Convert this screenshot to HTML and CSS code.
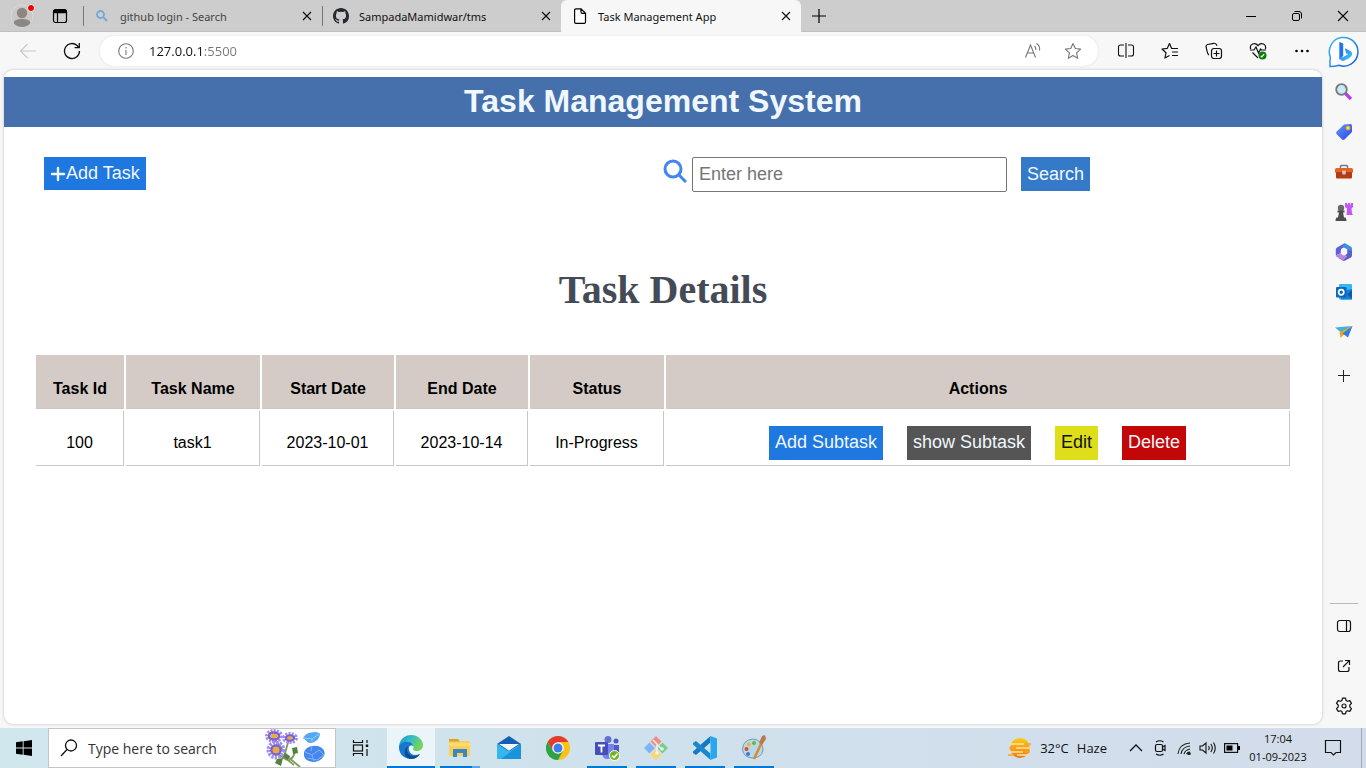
FILE: index.html
```html
<!DOCTYPE html>
<html lang="en">
<head>
<meta charset="utf-8">
<title>Task Management App</title>
<link rel="stylesheet" href="styles.css">
</head>
<body>
<header class="tabstrip">
  <button class="profile" aria-label="Profile">
    <svg width="26" height="26" viewBox="0 0 26 26"><circle cx="13" cy="13" r="11" fill="#cbc9c6" stroke="#dedad5"/><circle cx="13" cy="10" r="5.200" fill="#8b8784"/><path d="M4.500 20q.5-4 8.500-4t8.500 4q-3 4-8.500 4t-8.500-4z" fill="#8b8784"/><circle cx="22" cy="5" r="3.500" fill="#e60000" stroke="#eee"/></svg>
  </button>
  <button class="workspaces" aria-label="Tab actions">
    <svg width="16" height="16" viewBox="0 0 16 16" fill="none" stroke="#000" stroke-width="1.200"><rect x="1.500" y="1.500" width="13" height="13" rx="2"/><path d="M2 3.500h12" stroke-width="3.500"/><path d="M5.500 4v10"/></svg>
  </button>
  <nav class="tabs" aria-label="Tabs">
    <div class="tab">
      <svg width="16" height="16" viewBox="0 0 16 16" fill="none" stroke="#74a8d6" stroke-width="1.800"><circle cx="6.500" cy="6.500" r="3.500"/><path d="M9 9l4 4"/></svg>
      <a class="tab-title muted" href="#">github login - Search</a>
      <button class="close" aria-label="Close tab"><svg width="10" height="10" viewBox="0 0 10 10" stroke="#111" stroke-width="1.200"><path d="M1 1l8 8M9 1l-8 8"/></svg></button>
    </div>
    <div class="tab">
      <svg width="16" height="16" viewBox="0 0 16 16" fill="#24292f"><path d="M8 0C3.580 0 0 3.580 0 8c0 3.540 2.290 6.530 5.470 7.590.4.070.55-.17.55-.38v-1.490C3.730 14.200 3.300 12.640 3.300 12.640c-.36-.92-.89-1.170-.89-1.170-.73-.5.050-.49.050-.49.810.06 1.230.83 1.230.83.720 1.230 1.880.87 2.340.67.070-.52.280-.87.510-1.070-1.780-.2-3.640-.89-3.640-3.950 0-.87.310-1.590.82-2.150-.08-.2-.36-1.020.08-2.120 0 0 .67-.21 2.200.82a7.600 7.600 0 0 1 4 0c1.530-1.040 2.200-.82 2.200-.82.440 1.100.16 1.920.08 2.120.51.560.82 1.270.82 2.150 0 3.070-1.870 3.750-3.650 3.950.29.250.54.730.54 1.480v2.320c0 .21.150.46.550.38A8 8 0 0 0 16 8c0-4.420-3.580-8-8-8z"/></svg>
      <a class="tab-title" href="#">SampadaMamidwar/tms</a>
      <button class="close" aria-label="Close tab"><svg width="10" height="10" viewBox="0 0 10 10" stroke="#111" stroke-width="1.200"><path d="M1 1l8 8M9 1l-8 8"/></svg></button>
    </div>
    <div class="tab active">
      <svg width="16" height="16" viewBox="0 0 16 16" fill="#fff" stroke="#000" stroke-width="1.200"><path d="M4 .8h5l4.500 4.500V14q0 1.300-1.300 1.300H4Q2.600 15.300 2.600 14V2Q2.600.8 4 .8zM9 .8V4q0 1.300 1.300 1.300h3.200"/></svg>
      <a class="tab-title" href="#">Task Management App</a>
      <button class="close" aria-label="Close tab"><svg width="10" height="10" viewBox="0 0 10 10" stroke="#111" stroke-width="1.200"><path d="M1 1l8 8M9 1l-8 8"/></svg></button>
    </div>
  </nav>
  <button class="newtab" aria-label="New tab"><svg width="14" height="14" viewBox="0 0 14 14" stroke="#000" stroke-width="1.200"><path d="M7 0v14M0 7h14"/></svg></button>
  <div class="window-controls">
    <button aria-label="Minimise"><svg width="12" height="12" viewBox="0 0 12 12" stroke="#000"><path d="M1 6.500h10"/></svg></button>
    <button aria-label="Restore"><svg width="12" height="12" viewBox="0 0 12 12" fill="none" stroke="#000"><rect x="1.500" y="3.500" width="7" height="7" rx="1.500"/><path d="M3.500 1.500H8q2.500 0 2.500 2.500v4.500"/></svg></button>
    <button aria-label="Close"><svg width="12" height="12" viewBox="0 0 12 12" stroke="#000" stroke-width="1.100"><path d="M1 1l10 10M11 1L1 11"/></svg></button>
  </div>
</header>

<div class="browser">
  <div class="main-column">
    <div class="toolbar">
      <button class="tool back" aria-label="Back"><svg width="18" height="16" viewBox="0 0 18 16" fill="none" stroke="#c8c8c8" stroke-width="1.100"><path d="M17 8H2M8.500 1L1.500 8l7 7"/></svg></button>
      <button class="tool" aria-label="Refresh"><svg width="18" height="18" viewBox="0 0 18 18" fill="none" stroke="#111" stroke-width="1.300"><path d="M16.500 9A7.500 7.500 0 1 1 14.300 3.700L16 5.500M16.300 1v4.700h-4.700"/></svg></button>
      <div class="address">
        <svg width="16" height="16" viewBox="0 0 16 16" fill="none" stroke="#777" stroke-width="1.100"><circle cx="8" cy="8" r="7.300"/><path d="M8 7v5M8 4v1.500"/></svg>
        <input class="url" type="text" aria-label="Address" value="127.0.0.1:5500">
        <button class="inline-tool" aria-label="Read aloud"><svg width="18" height="18" viewBox="0 0 18 18" fill="none" stroke="#777" stroke-width="1.100"><path d="M1.500 15.500L6.500 3l5 12.500M3.300 11h6.400M10.500 4q1.500 1.500 1.300 4M12.500 1.500q4 2.500 3 7"/></svg></button>
        <button class="inline-tool" aria-label="Add to favourites"><svg width="18" height="18" viewBox="0 0 18 18" fill="none" stroke="#777" stroke-width="1.100" stroke-linejoin="round"><path d="M9 1.500l2.300 5 5.300.6-4 3.700 1.100 5.500L9 13.600l-4.700 2.700 1.100-5.500-4-3.700 5.300-.6z"/></svg></button>
      </div>
      <button class="tool" aria-label="Split screen"><svg width="18" height="18" viewBox="0 0 18 18" fill="none" stroke="#111" stroke-width="1.100"><path d="M7 3H3.500Q1.500 3 1.500 5v7q0 2 2 2H7M11 3h3.500q2 0 2 2v7q0 2-2 2H11M9 1v15"/></svg></button>
      <button class="tool" aria-label="Favourites"><svg width="18" height="18" viewBox="0 0 18 18" fill="none" stroke="#111" stroke-width="1.200" stroke-linejoin="round"><path d="M13 6.500H10.700L8.500 1.500 6.300 6.300 1 7l4 3.800-1.100 5.200L8.500 13.500M12 6.500h5M11 10h6M11 13.500h6"/></svg></button>
      <button class="tool" aria-label="Collections"><svg width="18" height="18" viewBox="0 0 18 18" fill="none" stroke="#111" stroke-width="1.200"><rect x="6.500" y="6.500" width="10" height="10" rx="2.500"/><path d="M11.500 8.500v6M8.500 11.500h6M4 13Q2.500 12 2 9L1 4.500Q1 3 2.500 2.500L9 1.300Q11 1 12 3.800"/></svg></button>
      <button class="tool" aria-label="Browser essentials"><svg width="18" height="18" viewBox="0 0 18 18" fill="none" stroke="#111" stroke-width="1.200"><path d="M1.700 7C0 2.500 6-.5 9 3.600 12-.5 18 2.500 16.300 7M1 8h4l2-3 2.500 6L11.500 7l1 1H17M3.500 10.500L9 16"/><circle cx="13.500" cy="13.500" r="4" fill="#107c10" stroke="none"/><path d="M11.800 13.800l1 1 2.400-2.600" stroke="#fff"/></svg></button>
      <button class="tool" aria-label="Settings and more"><svg width="16" height="16" viewBox="0 0 16 16"><g fill="#000"><circle cx="2.500" cy="8" r="1.300"/><circle cx="8" cy="8" r="1.300"/><circle cx="13.500" cy="8" r="1.300"/></g></svg></button>
    </div>

    <main class="page">
      <h1 class="banner">Task Management System</h1>
      <div class="actions-bar">
        <div class="add-cell">
          <button class="btn add-task"><svg width="16" height="16" viewBox="0 0 16 16" stroke="#f0f8ff" stroke-width="2.400" stroke-linecap="round"><path d="M8 2v12M2 8h12"/></svg>Add Task</button>
        </div>
        <form class="search-form">
          <label for="q" aria-label="Search tasks"><svg width="24" height="24" viewBox="0 0 24 24" fill="none" stroke="#4285f4" stroke-width="3"><circle cx="10" cy="10" r="8"/><path d="M16 16l7 7"/></svg></label>
          <input id="q" class="task-input" type="text" placeholder="Enter here">
          <button class="btn search-btn" type="button">Search</button>
        </form>
      </div>
      <h2 class="details-title">Task Details</h2>
      <table class="tasks">
        <colgroup><col class="col-id"><col class="col-wide"><col class="col-date"><col class="col-date"><col class="col-wide"><col></colgroup>
        <thead><tr><th>Task Id</th><th>Task Name</th><th>Start Date</th><th>End Date</th><th>Status</th><th>Actions</th></tr></thead>
        <tbody><tr>
          <td>100</td><td>task1</td><td>2023-10-01</td><td>2023-10-14</td><td>In-Progress</td>
          <td class="actions-cell"><div class="row-actions"><button class="btn add-sub">Add Subtask</button><button class="btn show-sub">show Subtask</button><button class="btn edit">Edit</button><button class="btn delete">Delete</button></div></td>
        </tr></tbody>
      </table>
    </main>
  </div>

  <aside class="sidebar">
    <button class="side bing" aria-label="Bing Chat"><svg width="32" height="32" viewBox="0 0 32 32"><defs><linearGradient id="ring" x1="0" y1="0" x2="1" y2="1"><stop stop-color="#35c0f0"/><stop offset="1" stop-color="#2258d8"/></linearGradient><linearGradient id="bee" x1="0" y1="0" x2="1" y2="1"><stop stop-color="#2a6ff0"/><stop offset="1" stop-color="#3fd0f2"/></linearGradient></defs><path d="M2 30.500V24q.5-1 .3-3A14.300 14.300 0 1 1 11 29.300Q7 30.500 2 30.500z" fill="#fff" stroke="url(#ring)" stroke-width="1.500"/><path d="M11.300 6l3 1q.9.300.9 1.300V20l-3.900 3.500z" fill="#2173ee"/><path d="M17 12.200l5.500 2.700q2.300 1.500 1.500 4.100-.8 2-3 3.300L15.500 25q-3 .5-4.100-2.800l3.800-1.200 4.800-2.700-2-1.100z" fill="url(#bee)"/></svg></button>
    <button class="side" aria-label="Search"><svg width="18" height="18" viewBox="0 0 18 18"><path d="M10.500 10.500l5.500 5.500" stroke="#b43df0" stroke-width="3.200"/><circle cx="6.500" cy="6.500" r="5.300" fill="#c8eafa" stroke="#777" stroke-width="1.800"/></svg></button>
    <button class="side" aria-label="Shopping"><svg width="18" height="18" viewBox="0 0 18 18"><defs><linearGradient id="tag" x1="0" y1="0" x2="1" y2="1"><stop stop-color="#5b9df5"/><stop offset="1" stop-color="#3142eb"/></linearGradient></defs><path d="M9 1.500L15.500 1q1.500 0 1.500 1.500V9l-7.500 7.500q-1.500.8-2.500 0L1.500 11q-.8-1.200 0-2.200z" fill="url(#tag)"/><circle cx="13" cy="5" r="2" fill="#ffe36b" stroke="#eb9f10"/></svg></button>
    <button class="side" aria-label="Tools"><svg width="18" height="18" viewBox="0 0 18 18"><path d="M5.500 6V3.500q0-1 1-1h5q1 0 1 1V6" fill="none" stroke="#777" stroke-width="1.500"/><rect y="5" width="18" height="5" rx="1.500" fill="#e0652b"/><rect x="1" y="9" width="16" height="6.500" rx="1" fill="#b53a12"/><rect x="7.200" y="7.500" width="3.600" height="4" rx="1" fill="#ccc"/></svg></button>
    <button class="side" aria-label="Games"><svg width="18" height="18" viewBox="0 0 18 18"><path d="M10 0h2v1.500h1V0h2v1.500h1V0h2v4l-1.500 1.500.5 5 1 1.500h-6.500l.5-6.500L10 4z" fill="#c257f5"/><circle cx="6" cy="5" r="3.200" fill="#6a6a6a"/><path d="M2.500 7.500h7v2H8l1 5h1.500q1 1 1 3.500H.5q0-2.500 1-3.500H3l1-5H2.500z" fill="#4c4c4c"/></svg></button>
    <button class="side" aria-label="Microsoft 365"><svg width="18" height="18" viewBox="0 0 18 18"><path d="M9.500.3L2 4.500Q.8 5.300.8 6.500v6L6 10V6l6-3.500z" fill="#5a62dc"/><path d="M9.500.3q.8 0 1.500.4l5 3.100q1 .7 1 2V12l-4.800-2.500V6.200L7.500 3.800z" fill="#3f8fe6"/><path d="M17 8v4.500q0 1.300-1 1.900l-5.800 3.200q-1.200.6-2.400 0L3.500 15l8.700-4.700V7z" fill="#5661c9"/><path d="M.8 12.500L6 9.800l6.300 3.500-4 4.300q-.6 0-1.300-.5l-5-3q-1-.6-1.200-1.600z" fill="#b884dd"/><path d="M9 5.300l3.200 1.900v3.600L9 12.700l-3.200-1.900V7.200z" fill="#f7f7f7"/></svg></button>
    <button class="side" aria-label="Outlook"><svg width="18" height="18" viewBox="0 0 18 18"><rect x="4" y="1" width="13" height="15.500" rx="1" fill="#35b8f1"/><path d="M5 8l12-2v10.500H6z" fill="#1285d8"/><path d="M17 7l-5 4.500 5 4.500z" fill="#0a5da8"/><rect x="1" y="4" width="10.500" height="10.500" rx="1" fill="#0b66bf"/><circle cx="6.200" cy="9.300" r="2.600" fill="none" stroke="#fff" stroke-width="1.700"/></svg></button>
    <button class="side" aria-label="Drop"><svg width="18" height="18" viewBox="0 0 18 18"><path d="M0 4.500L17.500 3 6 9.500z" fill="#39b3e8"/><path d="M17.500 3L4.500 9l1 6z" fill="#eda51b"/><path d="M17.500 3L13 14.500 7.500 10.500z" fill="#2c7fe5"/></svg></button>
    <button class="side add" aria-label="Customise"><svg width="12" height="12" viewBox="0 0 12 12" stroke="#222"><path d="M5.500 0v12M0 5.500h12"/></svg></button>
    <div class="side-bottom">
      <button class="side" aria-label="Hide sidebar"><svg width="16" height="16" viewBox="0 0 16 16" fill="none" stroke="#111" stroke-width="1.200"><rect x="1.500" y="2.500" width="13" height="11" rx="2.200"/><path d="M10.500 2.500v11"/></svg></button>
      <button class="side" aria-label="Open link"><svg width="16" height="16" viewBox="0 0 16 16" fill="none" stroke="#111" stroke-width="1.200"><path d="M7 3H4.500Q2.500 3 2.500 5v6.500q0 2 2 2H11q2 0 2-2V9M9 2.500h4.500V7M13.300 2.700L7 9"/></svg></button>
      <button class="side" aria-label="Settings"><svg width="18" height="18" viewBox="0 0 18 18" fill="none" stroke="#111" stroke-width="1.200" stroke-linejoin="round"><circle cx="9" cy="9" r="2"/><path d="M7.500 1.200h3l.6 2.300 1.400.8 2.300-.7 1.700 2.800L14.800 8v2l1.700 1.600-1.700 2.800-2.300-.7-1.400.8-.6 2.300h-3l-.6-2.300-1.400-.8-2.300.7-1.700-2.800L3.200 10V8L1.500 6.400l1.700-2.800 2.300.7 1.400-.8z"/></svg></button>
    </div>
  </aside>
</div>

<footer class="taskbar">
  <button class="start" aria-label="Start"><svg width="16" height="16" viewBox="0 0 16 16"><path d="M0 2.300L6.700 1.300v6.300H0zM7.600 1.200L16 0v7.600H7.600zM0 8.400h6.700v6.300L0 13.700zM7.600 8.400H16V16l-8.400-1.200z"/></svg></button>
  <div class="os-search">
    <svg width="18" height="18" viewBox="0 0 18 18" fill="none" stroke="#111" stroke-width="1.300"><circle cx="11" cy="6.500" r="5.500"/><path d="M7 10.500L1 17"/></svg>
    <input type="text" aria-label="Search Windows" placeholder="Type here to search">
    <svg class="flowers" width="64" height="38" viewBox="0 0 64 38">
      <path d="M10 8l15 20 12 10M26 10l-5 18 10 8M10 22l14 9M32 22q-1 7-7 10" fill="none" stroke="#7d9c58" stroke-width="1.800"/>
      <path d="M14 30l6-1-2 8-6-3zM29 19l5-1 1 6-5 1zM22 24l5 3-2 4-5-3z" fill="#55813e"/>
      <g fill="none" stroke="#a08df0"><ellipse cx="11" cy="7" rx="6.500" ry="4.500" stroke-width="5" stroke-dasharray="1.800 1"/><ellipse cx="27" cy="9" rx="5.500" ry="3.500" stroke-width="5" stroke-dasharray="1.800 1"/><circle cx="13" cy="21" r="6.500" stroke-width="6" stroke-dasharray="2 1"/></g>
      <g fill="none" stroke="#7663d0" stroke-width="2.500"><ellipse cx="11" cy="7" rx="5" ry="3.500"/><ellipse cx="27" cy="9" rx="4" ry="2.500"/><circle cx="13" cy="21" r="4.500"/></g>
      <g fill="#f0a83b"><ellipse cx="11" cy="7" rx="3.500" ry="2.200"/><ellipse cx="27" cy="9" rx="2.800" ry="1.700"/><circle cx="13" cy="21" r="3.300"/></g>
      <path d="M40 9q3-5 8-5.500 6-1.500 9 1 0 5-5 8-5 3-8 0z" fill="#54a8f2"/><path d="M41 9l8 1 7-5M49 9v4" stroke="#94cdfc" fill="none"/>
      <path d="M41 23q2-5 8-6 6-1 10 2 4 4 2 8-4 6-11 6-8-1-9-6z" fill="#4787ed"/><path d="M42 23l7 3 7-5 5 5-7 5-9-2M49 26l2 6M49 17l-1 5" stroke="#7db5f9" fill="none"/>
    </svg>
  </div>
  <button class="taskview" aria-label="Task view"><svg width="17" height="16" viewBox="0 0 17 16" fill="none" stroke="#111" stroke-width="1.200"><path d="M1.500 0v2.500h9V0M1.500 16v-2.500h9V16M15 0v3M15 9v7"/><rect x="1.500" y="5" width="9" height="6"/><rect x="13.800" y="4.500" width="2.400" height="2.500" fill="#111" stroke="none"/></svg></button>
  <nav class="apps" aria-label="Applications">
    <button class="app current" aria-label="Edge"><svg width="24" height="24" viewBox="0 0 24 24"><defs><linearGradient id="edge" x1="0" y1="0" x2="1" y2=".4"><stop stop-color="#1b8fd8"/><stop offset=".5" stop-color="#35bccb"/><stop offset="1" stop-color="#73d853"/></linearGradient></defs><path d="M0 11C1 4 6 0 12 0c7 0 12 5 12 10 0 4-3 6-6 6-3 0-5-1-4-3 1-4-3-6-6-5-3 0-6 1-8 3z" fill="url(#edge)"/><path d="M0 11c2-3 6-5 9-4 3 0 5 2 5 4-3-1-5 1-4 4 1 5 6 6 11 4-3 4-7 5-10 5C4 23.500-.5 18 0 11z" fill="#1479ca"/><path d="M9 11q-3 5 2 9 4 3 10-1-3 5-9 5Q4 22 6 15q1-3 3-4z" fill="#0d4b91"/><path d="M14.500 11.500q-3-2-4.500.5-.5 3 2 6 3 2 7.500 0l2-1.700q-4 1.200-7-.6-1-1.200 0-2.700z" fill="#eaf4f9"/></svg></button>
    <button class="app open stacked" aria-label="File Explorer"><svg width="24" height="24" viewBox="0 0 24 24"><path d="M1 3h9l2 2h10v15H1z" fill="#f9cf55"/><path d="M1 3h9l1.500 2.500H1z" fill="#dda21e"/><path d="M1 7h21v3H1z" fill="#ffdc72"/><path d="M5 13h14v8h-4v-4H9v4H5z" fill="#3a87c7"/></svg></button>
    <button class="app" aria-label="Mail"><svg width="24" height="24" viewBox="0 0 24 24"><path d="M0 8L12 0l12 8-12 8z" fill="#1160b6"/><path d="M0 8l12 7.500L24 8v15H0z" fill="#32b8ed"/><path d="M24 8L4 23h20z" fill="#1893dc"/><path d="M2 8h20L12 14.800z" fill="#f6f6f8"/></svg></button>
    <button class="app" aria-label="Chrome"><svg width="24" height="24" viewBox="0 0 24 24"><circle cx="12" cy="12" r="12" fill="#fbc116"/><path d="M1.600 6A12 12 0 0 1 22.400 6H12L7 15z" fill="#e33b2e"/><path d="M1.600 6A12 12 0 0 0 12 24l5-9H7z" fill="#2da34e"/><circle cx="12" cy="12" r="5.800" fill="#fff"/><circle cx="12" cy="12" r="4.500" fill="#3b7ded"/></svg></button>
    <button class="app open" aria-label="Teams"><svg width="26" height="26" viewBox="0 0 26 26"><circle cx="14" cy="4.500" r="3.500" fill="#6670ce"/><circle cx="22" cy="6" r="2.500" fill="#5059c9"/><path d="M18 10h7v8q-1 4-7 3z" fill="#5059c9"/><path d="M8 9h12v9q-1 6-7 6-4 0-5-5z" fill="#7b83eb"/><rect x="1" y="7" width="13" height="13" rx="1" fill="#454fba"/><path d="M4 10.500h7M7.500 10v7.500" stroke="#fff" stroke-width="1.800"/><circle cx="20.500" cy="20.500" r="5" fill="#6fb51e" stroke="#fff"/><path d="M18 20.500l2 2 3.500-4" stroke="#fff" fill="none" stroke-width="1.600"/></svg></button>
    <button class="app open" aria-label="Git Bash"><svg width="24" height="24" viewBox="0 0 24 24"><path d="M12 0l5.500 5.500L12 11 6.500 5.500z" fill="#f28c86"/><path d="M5.500 6.500L11 12l-5.500 5.500L0 12z" fill="#80b4f8"/><path d="M18.500 6.500L24 12l-5.500 5.500L13 12z" fill="#78cf83"/><path d="M12 13l5.500 5.500L12 24l-5.500-5.500z" fill="#fbd66a"/><path d="M9 4l4 4v10M13 9l5 4" stroke="#eef2f5" stroke-width="1.500" fill="none"/><circle cx="13" cy="17" r="1.800" fill="#eef2f5"/><circle cx="18" cy="13" r="1.800" fill="#eef2f5"/></svg></button>
    <button class="app open" aria-label="VS Code"><svg width="24" height="24" viewBox="0 0 24 24"><path d="M17.500 0v6.500L3 19 0 17v-1.500z" fill="#1579c2"/><path d="M0 8.500V7l3-2 14.500 12.500V24z" fill="#1a88cf"/><path d="M17.500 0L24 2.500v19L17.500 24z" fill="#28a7ef"/></svg></button>
    <button class="app open" aria-label="Paint"><svg width="26" height="26" viewBox="0 0 26 26"><path d="M12 4Q2 5 1.500 14 2 22 11 23q10 0 11-8 0-10-10-11z" fill="#b6d9e9" stroke="#7899b0"/><circle cx="5.500" cy="14" r="2" fill="#dd493d"/><circle cx="8" cy="9.500" r="2" fill="#f0b82f"/><circle cx="13" cy="8" r="2" fill="#65b747"/><circle cx="7" cy="19" r="2" fill="#4774d8"/><path d="M13 24L20 9" stroke="#d98a36" stroke-width="2.600"/><path d="M18 8l3-7 3-1 1 4-4 6z" fill="#b97b4b"/></svg></button>
  </nav>
  <div class="tray">
    <button class="weather"><svg width="24" height="22" viewBox="0 0 24 22"><defs><linearGradient id="sun" x1="0" y1="0" x2="0" y2="1"><stop stop-color="#fccb12"/><stop offset="1" stop-color="#f27719"/></linearGradient></defs><circle cx="12" cy="11" r="10" fill="url(#sun)"/><path d="M2 7h14M8 11h14M2 15h13M9 18h11" stroke="#ffe2a3" stroke-width="1.300"/><path d="M18 7h5M1 11h4M17 15h5M0 18h6" stroke="#f7a43a" stroke-width="1.300"/></svg><span>32°C</span><span>Haze</span></button>
    <button class="tray-icon" aria-label="Show hidden icons"><svg width="14" height="8" viewBox="0 0 14 8" fill="none" stroke="#111" stroke-width="1.300"><path d="M1 7l6-6 6 6"/></svg></button>
    <button class="tray-icon" aria-label="Meet Now"><svg width="12" height="16" viewBox="0 0 12 16" fill="none" stroke="#111" stroke-width="1.200"><rect x="1.500" y="4.500" width="7" height="7" rx="1.500"/><path d="M8.500 7l2.500-1.500v5L8.500 9M2 2q4-2.500 7.500 0M2 14q4 2.500 7.500 0"/></svg></button>
    <button class="tray-icon" aria-label="Network"><svg width="14" height="14" viewBox="0 0 14 14" fill="none" stroke="#222" stroke-width="1.100"><path d="M1 13Q2 3 13 2M4 13q1-7 9-8M7 13q1-4 6-5M9.500 13q1-2 3.500-2"/><circle cx="12" cy="12.500" r="1.200" fill="#222"/></svg></button>
    <button class="tray-icon" aria-label="Volume"><svg width="18" height="14" viewBox="0 0 18 14" fill="none" stroke="#111" stroke-width="1.100"><path d="M1 5h2.500L7 2v10L3.500 9H1zM9.500 5q1.500 2 0 4M11.800 3q3 4 0 8M14.500 1.500q3.500 5.500 0 11"/></svg></button>
    <button class="tray-icon" aria-label="Battery"><svg width="16" height="10" viewBox="0 0 16 10"><rect x=".6" y=".6" width="13" height="8.800" fill="none" stroke="#111" stroke-width="1.200"/><path d="M2.500 2.500h6v5h-6zM14 3h2v4h-2z"/></svg></button>
    <button class="clock"><span>17:04</span><span>01-09-2023</span></button>
    <button class="notice" aria-label="Notifications"><svg width="18" height="18" viewBox="0 0 18 18" fill="none" stroke="#111" stroke-width="1.200"><path d="M1.500 1.500h15v12H12L9.500 16 7 13.500H1.500z"/></svg></button>
  </div>
</footer>
</body>
</html>
```

FILE: styles.css
```css
* { box-sizing: border-box; }
body {
  margin: 0;
  min-height: 100vh;
  display: flex;
  flex-direction: column;
  font-family: "Open Sans", "Noto Sans", sans-serif;
  color: #111;
  background: #f7f7f7;
}
button {
  border: 0;
  padding: 0;
  background: none;
  font: inherit;
  color: inherit;
  display: flex;
  align-items: center;
  justify-content: center;
}
a { color: inherit; text-decoration: none; }
svg { flex: none; display: block; }

/* Tab strip */
.tabstrip {
  display: flex;
  height: 32px;
  background: #cdcdcd;
  box-shadow: inset 0 -1px #c0c0c0;
  font-family: "Noto Sans", "Open Sans", sans-serif;
  font-size: 11px;
}
.profile { width: 44px; }
.workspaces { width: 32px; }
.tabs { display: flex; margin-left: 7px; }
.tab {
  display: flex;
  align-items: center;
  width: 239px;
  padding: 0 10px 0 11px;
  background: linear-gradient(#777, #777) left center / 1px 20px no-repeat;
}
.tab.active {
  width: 240px;
  background: #f7f7f7;
  border-radius: 6px 6px 0 0;
}
.tab-title { flex: 1; margin-left: 10px; white-space: nowrap; }
.muted { color: #444; }
.close { width: 10px; }
.newtab { width: 35px; }
.window-controls { display: flex; margin-left: auto; }
.window-controls button { width: 46px; }

/* Browser frame */
.browser { flex: 1; display: flex; }
.main-column { flex: 1; min-width: 0; display: flex; flex-direction: column; }
.toolbar {
  display: flex;
  align-items: center;
  height: 38px;
  padding-left: 6px;
}
.tool { width: 44px; height: 30px; }
.tool:last-child { margin-right: -2px; }
.address {
  flex: 1;
  display: flex;
  align-items: center;
  height: 30px;
  margin: 0 6px;
  padding: 0 5px 0 18px;
  background: #fff;
  border-radius: 15px;
  box-shadow: 0 0 3px #e4e4e4;
}
.url {
  flex: 1;
  min-width: 0;
  margin-left: 15px;
  padding: 0;
  border: 0;
  font: 13px "Open Sans", sans-serif;
  color: transparent;
  background: linear-gradient(90deg, #111 54px, #777 54px);
  -webkit-background-clip: text;
  background-clip: text;
}
.inline-tool { width: 40px; }

/* Task page */
.page {
  flex: 1;
  margin: 0 0 4px 4px;
  padding: 7px 0 24px;
  background: #fff;
  border-radius: 9px;
  box-shadow: 0 0 3px #bbb;
  font-family: "Liberation Sans", Arial, sans-serif;
}
.banner {
  margin: 0;
  padding-bottom: 2px;
  background: #4670ac;
  color: #f0f8ff;
  font-size: 32px;
  line-height: 48px;
  text-align: center;
}
.actions-bar {
  display: grid;
  grid-template-columns: 1fr 1fr;
  align-items: start;
  margin-top: 30px;
}
.add-cell { padding-left: 40px; }
.btn {
  height: 34px;
  padding: 0 6px;
  font-size: 18px;
  white-space: nowrap;
  color: #f0f8ff;
}
.add-task { height: 33px; background: #1f77e0; }
.search-form { display: flex; align-items: flex-start; }
.search-form label { padding: 2px 5px 0 0; }
.task-input {
  width: 315px;
  height: 35px;
  padding: 0 6px;
  border: 1px solid #767676;
  border-radius: 2px;
  font: 18px "Liberation Sans", Arial, sans-serif;
}
.task-input::placeholder { color: #757575; }
.search-btn { margin-left: 14px; background: #357ac9; }
.details-title {
  margin: 75px 0 40px;
  font: bold 40px/46px "Liberation Serif", "Times New Roman", serif;
  color: #444b57;
  text-align: center;
}
.tasks {
  width: calc(100% - 60px);
  margin: 0 30px;
  table-layout: fixed;
  border-collapse: separate;
  border-spacing: 2px;
  font-size: 16px;
  line-height: 18px;
  text-align: center;
  color: #000;
}
.col-id { width: 88px; }
.col-wide { width: 134px; }
.col-date { width: 132px; }
.tasks th {
  padding: 25px 4px 10px;
  background: #d4cbc6;
  border-bottom: 1px solid #c8c8c8;
}
.tasks td {
  padding: 15px 4px 5px;
  border-right: 1px solid #c8c8c8;
  border-bottom: 1px solid #c8c8c8;
}
.tasks .actions-cell { padding: 15px 4px 5px; }
.row-actions { display: flex; justify-content: center; gap: 24px; }
.row-actions .btn { padding-bottom: 2px; }
.add-sub { background: #1f77e0; }
.show-sub { background: #555; }
.edit { background: #dede1b; color: #111; }
.delete { background: #c30606; }

/* Sidebar */
.sidebar {
  display: flex;
  flex-direction: column;
  width: 44px;
  padding-bottom: 2px;
}
.side { width: 44px; height: 40px; }
.add { height: 48px; }
.side-bottom { margin-top: auto; }
.side-bottom::before {
  content: "";
  display: block;
  height: 1px;
  margin: 0 8px 2px;
  background: #bbb;
}

/* Taskbar */
.taskbar {
  display: flex;
  height: 40px;
  background: linear-gradient(90deg, #d0e7ee, #cfe1ec 50%, #d3dcea);
}
.start, .taskview { width: 48px; }
.os-search {
  display: flex;
  align-items: center;
  width: 288px;
  padding-left: 11px;
  background: #fff;
  border: 1px solid #c4c4c4;
}
.os-search input {
  flex: 1;
  min-width: 0;
  margin-left: 10px;
  padding: 0;
  border: 0;
  font: 14px "Open Sans", sans-serif;
}
.os-search input::placeholder { color: #333; }
.flowers { margin-right: 8px; }
.apps { display: flex; gap: 1px; margin-left: 3px; }
.app { width: 48px; }
.open { background: linear-gradient(#0078d7, #0078d7) center bottom / 40px 2px no-repeat; }
.stacked { background-image: linear-gradient(90deg, #0078d7 32px, #5ba7e5 32px); }
.current { background: #eaf4f9; border-bottom: 2px solid #0078d7; }
.tray { display: flex; margin-left: auto; font-size: 13px; }
.weather { gap: 8px; margin-right: 17px; }
.tray-icon { width: 24px; }
.clock {
  flex-direction: column;
  width: 68px;
  font-size: 11px;
  line-height: 18px;
}
.notice {
  width: 50px;
  padding-right: 8px;
  margin-right: 4px;
  border-right: 1px solid #9daabb;
}
```
